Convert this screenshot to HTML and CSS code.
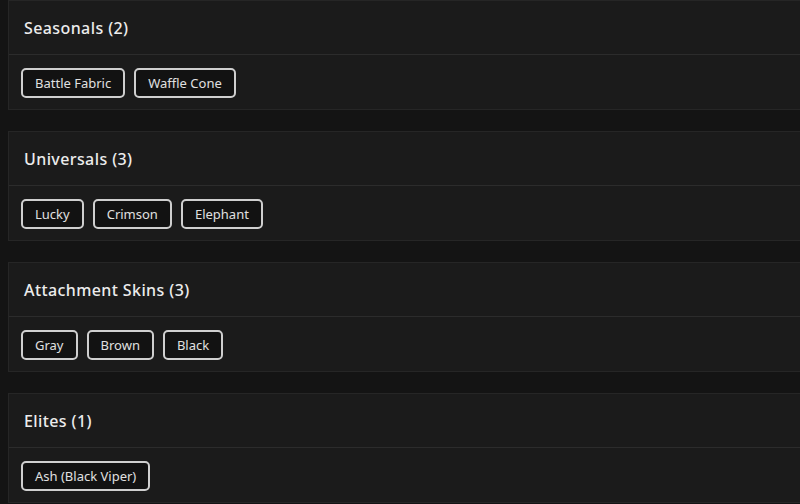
FILE: index.html
```html
<!DOCTYPE html>
<html>
<head>
<meta charset="utf-8">
<link rel="stylesheet" href="styles.css">
</head>
<body>
<div class="list">
  <section class="card">
    <div class="card-head">Seasonals (2)</div>
    <div class="card-body">
      <span class="tag">Battle Fabric</span>
      <span class="tag">Waffle Cone</span>
    </div>
  </section>
  <section class="card">
    <div class="card-head">Universals (3)</div>
    <div class="card-body">
      <span class="tag">Lucky</span>
      <span class="tag">Crimson</span>
      <span class="tag">Elephant</span>
    </div>
  </section>
  <section class="card">
    <div class="card-head">Attachment Skins (3)</div>
    <div class="card-body">
      <span class="tag">Gray</span>
      <span class="tag">Brown</span>
      <span class="tag">Black</span>
    </div>
  </section>
  <section class="card">
    <div class="card-head">Elites (1)</div>
    <div class="card-body">
      <span class="tag">Ash (Black Viper)</span>
    </div>
  </section>
</div>
</body>
</html>
```

FILE: styles.css
```css
html, body {
  margin: 0;
  padding: 0;
  background: #141414;
  overflow: hidden;
}
body {
  font-family: "Noto Sans", "Open Sans", sans-serif;
  color: #e6e6e6;
}
.list {
  display: flex;
  flex-direction: column;
  gap: 21px;
  padding-left: 8px;
}
.card {
  background: #1b1b1b;
  border: 1px solid #262626;
  border-right: none;
  height: 110px;
  box-sizing: border-box;
}
.card-head {
  height: 54px;
  box-sizing: border-box;
  border-bottom: 1px solid #2c2c2c;
  padding-left: 15px;
  display: flex;
  align-items: center;
  font-size: 16px;
  font-weight: 500;
  letter-spacing: 0.4px;
  color: #ececec;
}
.card-body {
  display: flex;
  gap: 9px;
  padding: 13px 12px 11px;
}
.tag {
  display: inline-flex;
  align-items: center;
  height: 30px;
  box-sizing: border-box;
  padding: 0 12px;
  border: 2px solid #cfcfcf;
  border-radius: 5px;
  background: #121212;
  font-size: 13px;
  color: #e0e0e0;
}
```
